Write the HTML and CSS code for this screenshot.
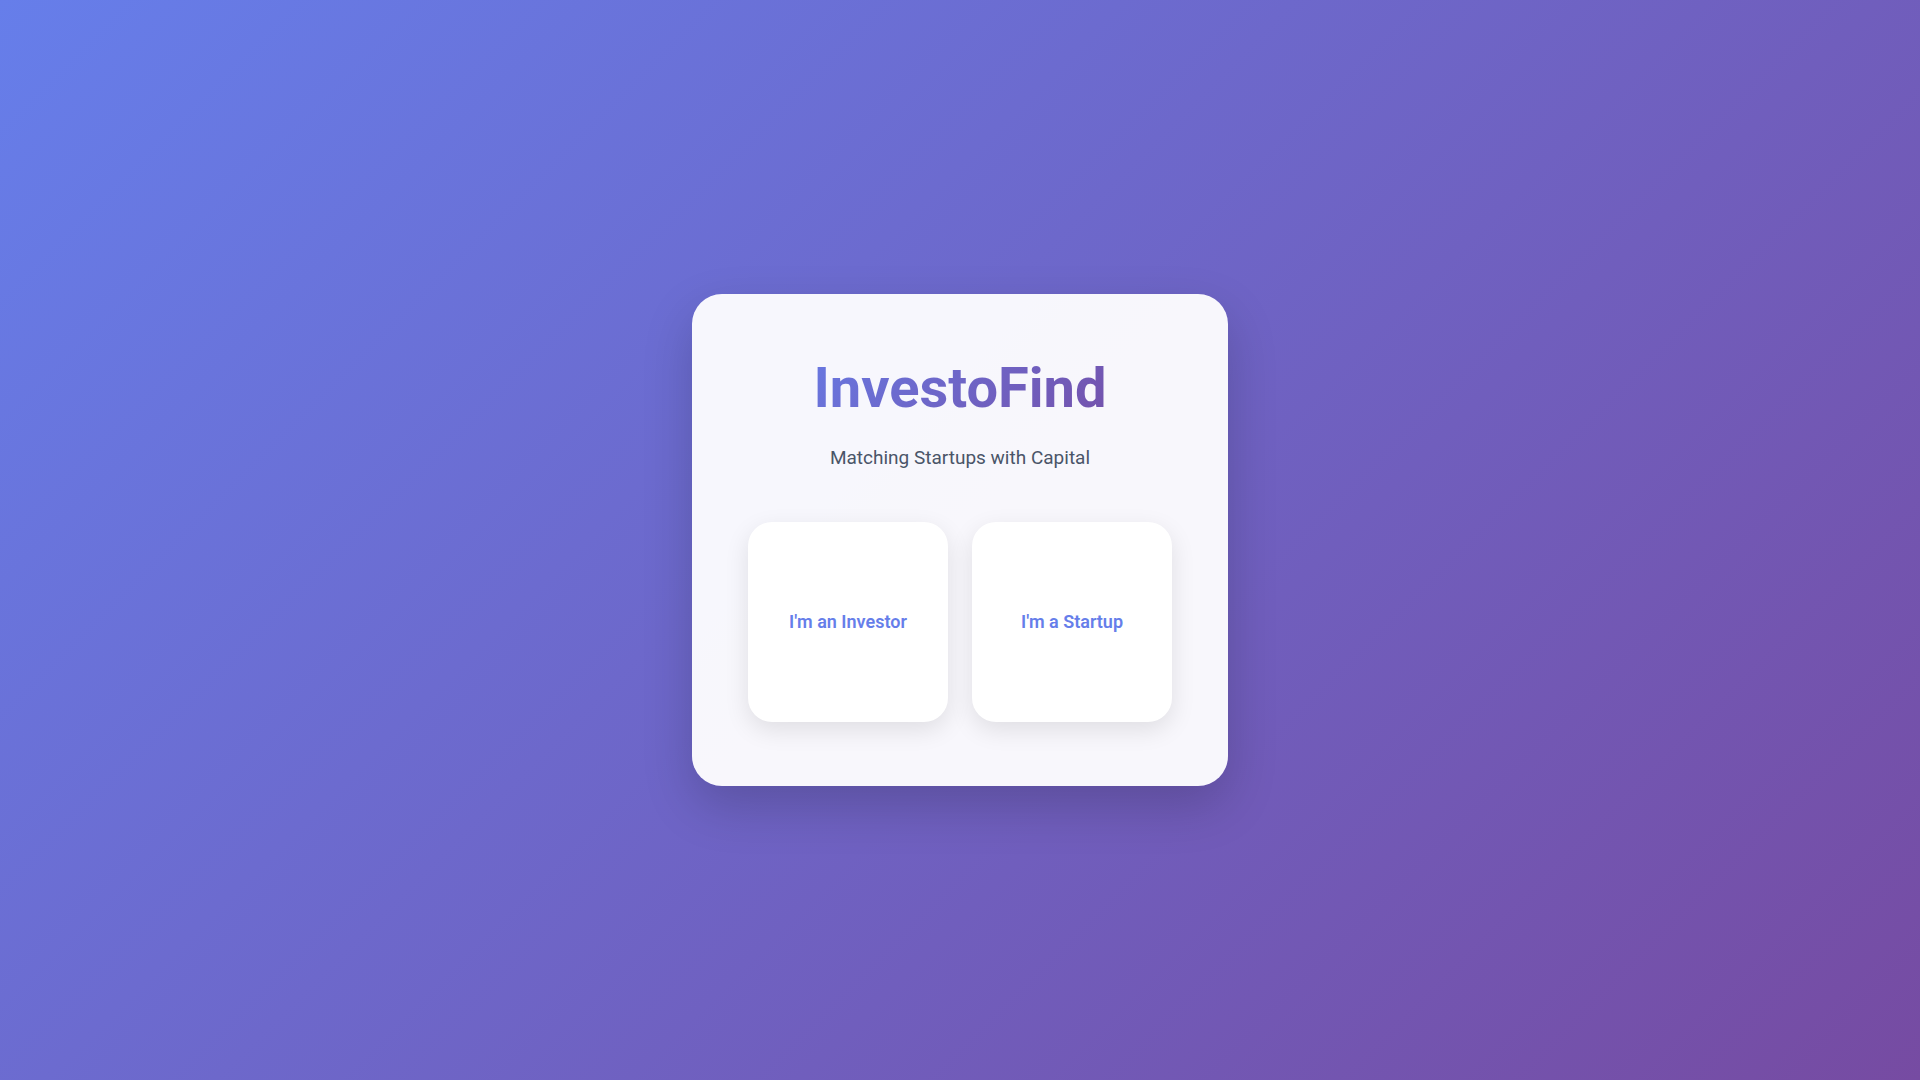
FILE: index.html
```
<!DOCTYPE html>
<html lang="en">
<head>
  <meta charset="UTF-8">
  <meta name="viewport" content="width=device-width, initial-scale=1">
  <title>InvestoFind</title>
  <link rel="stylesheet" href="styles.css">
</head>
<body>
  <main class="card">
    <h1 class="title">InvestoFind</h1>
    <p class="subtitle">Matching Startups with Capital</p>
    <div class="choices">
      <button type="button" class="choice">I'm an Investor</button>
      <button type="button" class="choice">I'm a Startup</button>
    </div>
  </main>
</body>
</html>
```
FILE: styles.css
```
* {
  box-sizing: border-box;
}

body {
  margin: 0;
  min-height: 100vh;
  display: flex;
  align-items: center;
  justify-content: center;
  font-family: Roboto, sans-serif;
  background: linear-gradient(135deg, #667eea 0%, #764ba2 100%);
}

.card {
  padding: 64px 56px;
  border-radius: 30px;
  background: rgba(255, 255, 255, 0.95);
  box-shadow: 0 20px 50px rgba(0, 0, 0, 0.18);
  text-align: center;
}

.title {
  margin: 0 0 24px;
  font-size: 56px;
  line-height: 60px;
  font-weight: 700;
  background: linear-gradient(135deg, #667eea 0%, #764ba2 100%);
  background-clip: text;
  -webkit-background-clip: text;
  color: transparent;
}

.subtitle {
  margin: 0 0 48px;
  font-size: 19px;
  line-height: 32px;
  color: #4a5568;
}

.choices {
  display: flex;
  flex-wrap: wrap;
  justify-content: center;
  gap: 24px;
}

.choice {
  width: 200px;
  aspect-ratio: 1;
  border: 0;
  border-radius: 24px;
  background: #fff;
  box-shadow: 0 8px 24px rgba(0, 0, 0, 0.1);
  color: #667eea;
  font-family: inherit;
  font-size: 18px;
  line-height: 20px;
  font-weight: 600;
  cursor: pointer;
}
```
